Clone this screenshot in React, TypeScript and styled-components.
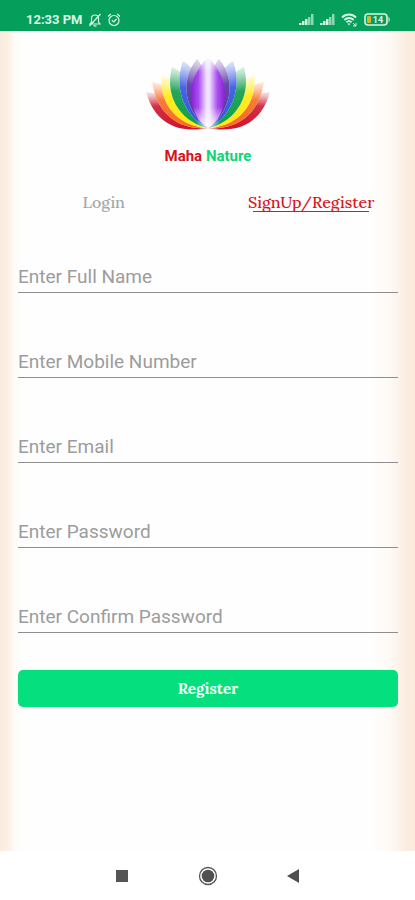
import React, { useState } from "react";
import styled, { createGlobalStyle } from "styled-components";

const GlobalStyle = createGlobalStyle`
  *, *::before, *::after { box-sizing: border-box; }
  body { margin: 0; background: #fefefe; }
  button, input { font: inherit; margin: 0; }
`;

const serif = `Lora, "Liberation Serif", serif`;

const Screen = styled.div`
  min-height: 100vh;
  display: flex;
  flex-direction: column;
  font-family: Roboto, sans-serif;
`;

const StatusBar = styled.header`
  height: 31px;
  padding: 8px 24px 0 26px;
  display: flex;
  align-items: center;
  justify-content: space-between;
  background: #059f5b;
  color: #d9f5e5;
`;

const StatusGroup = styled.div<{ $gap: number }>`
  display: flex;
  align-items: center;
  gap: ${(p) => p.$gap}px;
`;

const Clock = styled.time`
  font-size: 13px;
  line-height: 16px;
  font-weight: 700;
`;

const Page = styled.main`
  flex: 1;
  display: flex;
  flex-direction: column;
  padding: 26px 17px 0 18px;
  background:
    linear-gradient(to right, #faecdd 0, #fcf1e5 9px, #fefcf9 15px, transparent 24px),
    linear-gradient(to left, #f9eadb 0, #fbefe4 12px, #fefaf6 26px, transparent 44px),
    #fefefe;
`;

const Brand = styled.div`
  display: flex;
  flex-direction: column;
  align-items: center;
  gap: 16px;
`;

const BrandName = styled.h1`
  margin: 0;
  font-size: 15px;
  line-height: 18px;
  font-weight: 700;
  color: #d3141c;
`;

const BrandAccent = styled.span`
  color: #12d477;
`;

const Tabs = styled.div`
  display: grid;
  grid-template-columns: 1fr 1fr;
  margin: 24px -17px 0 -18px;
`;

const Tab = styled.button<{ $active: boolean }>`
  position: relative;
  border: 0;
  padding: 0;
  height: 26px;
  background: none;
  font-family: ${serif};
  font-size: 16px;
  line-height: 26px;
  font-weight: 500;
  color: ${(p) => (p.$active ? "#d6191f" : "#a3a9aa")};
  cursor: pointer;

  &::after {
    content: "";
    display: ${(p) => (p.$active ? "block" : "none")};
    position: absolute;
    bottom: 3px;
    left: 50%;
    width: 116px;
    margin-left: -58px;
    border-bottom: 1px solid #d6191f;
  }
`;

const Form = styled.form`
  display: flex;
  flex-direction: column;
  padding-top: 43px;
`;

const Field = styled.input`
  width: 100%;
  height: 35px;
  margin-bottom: 50px;
  padding: 3px 0 0;
  border: 0;
  border-bottom: 1px solid #8e8e8e;
  border-radius: 0;
  outline: none;
  background: transparent;
  color: #333;
  font-size: 19px;
  font-weight: 400;

  &::placeholder { color: #9c9c9c; opacity: 1; }
  &:focus { border-bottom-color: #059f5b; }
`;

const Submit = styled.button`
  height: 37px;
  margin-top: -13px;
  border: 0;
  border-radius: 5px;
  background: #06df7d;
  color: #f4fff9;
  font-family: ${serif};
  font-size: 15px;
  font-weight: 700;
  cursor: pointer;
`;

const NavBar = styled.nav`
  height: 49px;
  padding: 0 79px;
  display: flex;
  align-items: center;
  justify-content: space-between;
  background: #fff;
`;

const NavButton = styled.button`
  display: grid;
  place-items: center;
  width: 86px;
  height: 48px;
  padding: 0;
  border: 0;
  background: none;
  cursor: pointer;
`;

const petals = [
  { id: "red", color: "#cf1830", tip: [0, 35], d: "M62 71C36 76 10 70 0 35C18 36 46 54 62 71Z" },
  { id: "orange", color: "#fb6b20", tip: [6, 25], d: "M62 71C38 73 12 62 6 25C26 28 50 50 62 71Z" },
  { id: "yellow", color: "#ffe90a", tip: [15, 18], d: "M62 71C40 70 14 56 15 18C34 24 54 46 62 71Z" },
  { id: "green", color: "#0c9c48", tip: [26, 10], d: "M62 71C40 67 17 44 26 10C44 18 58 42 62 71Z" },
  { id: "blue", color: "#2f55e0", tip: [37, 4], d: "M62 71C42 63 26 34 37 4C54 14 62 42 62 71Z" },
  { id: "indigo", color: "#57309f", tip: [51, 2], d: "M62 71C42 58 31 26 51 2C62 14 66 46 62 71Z" },
] as const;

const HalfLotus = () => (
  <>
    {petals.map((p) => (
      <React.Fragment key={p.id}>
        <path d={p.d} fill="#fff" />
        <path d={p.d} fill={`url(#petal-${p.id})`} />
      </React.Fragment>
    ))}
  </>
);

const Lotus = () => (
  <svg width="124" height="74" viewBox="0 0 124 74" role="img" aria-label="Lotus">
    <defs>
      {petals.map((p) => (
        <linearGradient key={p.id} id={`petal-${p.id}`} gradientUnits="userSpaceOnUse" x1={p.tip[0] + 7} y1={p.tip[1]} x2={(p.tip[0] + 20) / 2} y2="71">
          <stop offset="0" stopColor={p.color} stopOpacity=".12" />
          <stop offset=".12" stopColor={p.color} stopOpacity=".3" />
          <stop offset=".4" stopColor={p.color} stopOpacity=".9" />
          <stop offset="1" stopColor={p.color} />
        </linearGradient>
      ))}
      <linearGradient id="petal-violet">
        <stop offset="0" stopColor="#8a20d8" />
        <stop offset=".22" stopColor="#a94fee" />
        <stop offset=".46" stopColor="#f1e2ff" />
        <stop offset=".54" stopColor="#f1e2ff" />
        <stop offset=".78" stopColor="#a94fee" />
        <stop offset="1" stopColor="#8a20d8" />
      </linearGradient>
      <linearGradient id="violet-tip" x1="0" y1="0" x2="0" y2="1">
        <stop offset="0" stopColor="#fff" stopOpacity=".75" />
        <stop offset=".2" stopColor="#fff" stopOpacity="0" />
        <stop offset=".7" stopColor="#fff" stopOpacity="0" />
        <stop offset="1" stopColor="#fff" stopOpacity=".9" />
      </linearGradient>
      <radialGradient id="base-glow" gradientUnits="userSpaceOnUse" cx="62" cy="66" r="12">
        <stop offset="0" stopColor="#fff" stopOpacity=".9" />
        <stop offset="1" stopColor="#fff" stopOpacity="0" />
      </radialGradient>
    </defs>
    <HalfLotus />
    <g transform="matrix(-1 0 0 1 124 0)">
      <HalfLotus />
    </g>
    <circle cx="62" cy="66" r="12" fill="url(#base-glow)" />
    <path d="M62 71C41 58 38 22 62 1C86 22 83 58 62 71Z" fill="url(#petal-violet)" />
    <path d="M62 71C41 58 38 22 62 1C86 22 83 58 62 71Z" fill="url(#violet-tip)" />
  </svg>
);

const MutedBell = () => (
  <svg width="14" height="14" viewBox="0 0 14 14" fill="none" stroke="currentColor" strokeWidth="1.2" aria-hidden="true">
    <path d="M2 11h10L10.5 9V5.5C10.5 3.2 9 2 7 2S3.500 3.200 3.500 5.500V9L2 11ZM5.500 12.800h3M1.500 13L12.500 1" />
  </svg>
);

const Alarm = () => (
  <svg width="14" height="14" viewBox="0 0 14 14" fill="none" stroke="currentColor" strokeWidth="1.2" aria-hidden="true">
    <circle cx="7" cy="7.500" r="5" />
    <path d="M1 3.500L3.800 1M13 3.500L10.200 1M4.800 7L6.800 9L9.500 6" />
  </svg>
);

const Signal = () => (
  <svg width="15" height="11" viewBox="0 0 15 11" fill="currentColor" aria-hidden="true">
    <path d="M0 9h2.500v2H0zM3 7h2.500v4H3zM6 5h2.500v6H6z" />
    <path d="M9 3h2.500v8H9zM12 0h2.500v11H12z" opacity=".65" />
  </svg>
);

const Wifi = () => (
  <svg width="17" height="14" viewBox="0 0 17 14" fill="none" stroke="currentColor" strokeWidth="1.8" aria-hidden="true">
    <path d="M1 4.500C5 .5 11 .5 15 4.500M3.300 7C6 4.300 10 4.300 12.700 7M5.500 9.300C7 7.800 9 7.800 10.500 9.300" />
    <path d="M6.500 10.500L8 12.500L9.500 10.500Z" fill="currentColor" stroke="none" />
    <path d="M12 10l3 3M15 10v3h-3" strokeWidth="1" />
  </svg>
);

const Battery = () => (
  <svg width="27" height="13" viewBox="0 0 27 13" role="img" aria-label="Battery 14 percent">
    <rect x="1" y="1" width="22" height="11" rx="3" fill="none" stroke="currentColor" strokeWidth="1.600" />
    <rect x="3" y="3" width="4" height="7" rx="1" fill="#d8b32e" />
    <path d="M24.500 3.500Q27 6.500 24.500 9.500Z" fill="currentColor" />
    <text x="14" y="9.500" textAnchor="middle" fontFamily="Roboto, sans-serif" fontSize="9" fontWeight="700" fill="currentColor">14</text>
  </svg>
);

const fields = [
  { label: "Enter Full Name", type: "text", name: "name" },
  { label: "Enter Mobile Number", type: "tel", name: "mobile" },
  { label: "Enter Email", type: "email", name: "email" },
  { label: "Enter Password", type: "password", name: "password" },
  { label: "Enter Confirm Password", type: "password", name: "confirm" },
];

export default function App() {
  const [tab, setTab] = useState<"login" | "register">("register");
  return (
    <Screen>
      <GlobalStyle />
      <StatusBar>
        <StatusGroup $gap={5}>
          <Clock>12:33 PM</Clock>
          <MutedBell />
          <Alarm />
        </StatusGroup>
        <StatusGroup $gap={6}>
          <Signal />
          <Signal />
          <Wifi />
          <Battery />
        </StatusGroup>
      </StatusBar>
      <Page>
        <Brand>
          <Lotus />
          <BrandName>
            Maha <BrandAccent>Nature</BrandAccent>
          </BrandName>
        </Brand>
        <Tabs role="tablist">
          <Tab type="button" role="tab" aria-selected={tab === "login"} $active={tab === "login"} onClick={() => setTab("login")}>
            Login
          </Tab>
          <Tab type="button" role="tab" aria-selected={tab === "register"} $active={tab === "register"} onClick={() => setTab("register")}>
            SignUp/Register
          </Tab>
        </Tabs>
        <Form onSubmit={(e) => e.preventDefault()}>
          {fields.map((f) => (
            <Field key={f.name} name={f.name} type={f.type} placeholder={f.label} aria-label={f.label} />
          ))}
          <Submit type="submit">Register</Submit>
        </Form>
      </Page>
      <NavBar aria-label="System">
        <NavButton type="button" aria-label="Recent apps">
          <svg width="12" height="12" viewBox="0 0 12 12"><rect width="12" height="12" fill="#555" /></svg>
        </NavButton>
        <NavButton type="button" aria-label="Home">
          <svg width="20" height="20" viewBox="0 0 20 20">
            <circle cx="10" cy="10" r="8.500" fill="none" stroke="#555" strokeWidth="1.300" />
            <circle cx="10" cy="10" r="6.300" fill="#505050" />
          </svg>
        </NavButton>
        <NavButton type="button" aria-label="Back">
          <svg width="12" height="14" viewBox="0 0 12 14"><path d="M12 0v14L0 7Z" fill="#505050" /></svg>
        </NavButton>
      </NavBar>
    </Screen>
  );
}
